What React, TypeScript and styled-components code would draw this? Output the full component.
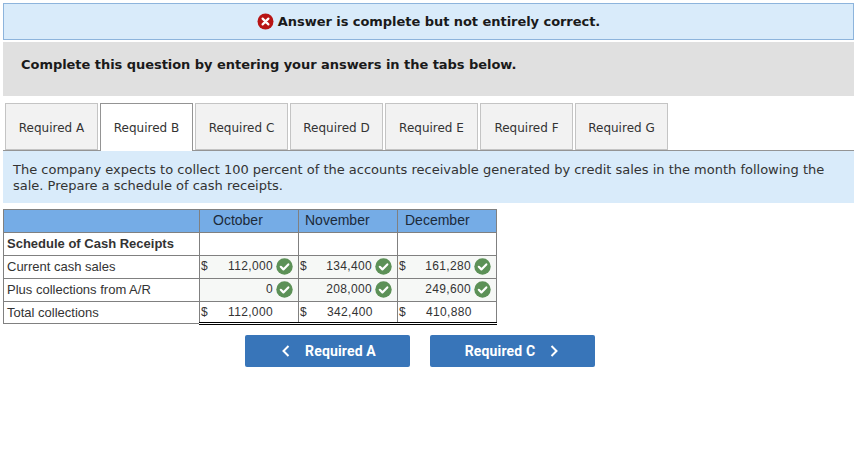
import * as React from 'react';
import styled, { createGlobalStyle } from 'styled-components';

const Global = createGlobalStyle`
  html, body {
    margin: 0;
    padding: 0;
    background: #fff;
  }
`;

const Page = styled.div`
  width: 851px;
  padding: 3px 0 0 3px;
  font-family: 'DejaVu Sans', Verdana, sans-serif;
`;

const Banner = styled.div`
  box-sizing: border-box;
  height: 37px;
  display: flex;
  align-items: center;
  justify-content: center;
  gap: 4px;
  background: #d9ebfa;
  border: 1px solid #8db4dc;
  font-size: 13px;
  font-weight: bold;
  letter-spacing: -0.05px;
  color: #1a1a1a;
`;

const Instruction = styled.div`
  box-sizing: border-box;
  height: 54px;
  margin-top: 2px;
  padding: 15px 18px 0;
  background: #e0e0e0;
  font-size: 13px;
  font-weight: bold;
  letter-spacing: -0.045px;
  line-height: 16px;
  color: #1a1a1a;
`;

const Tabs = styled.div`
  display: flex;
  gap: 2px;
  margin-top: 7px;
  padding-left: 2px;
  border-bottom: 1px solid #949494;
  height: 47px;
`;

const Tab = styled.div<{ $active?: boolean }>`
  box-sizing: border-box;
  width: 93px;
  height: ${p => (p.$active ? 48 : 47)}px;
  padding-top: ${p => (p.$active ? 0 : 2)}px;
  display: flex;
  align-items: center;
  justify-content: center;
  background: ${p => (p.$active ? '#fff' : '#f2f2f2')};
  border: 1px solid ${p => (p.$active ? '#949494' : '#c4c4c4')};
  border-bottom: ${p => (p.$active ? 'none' : undefined)};
  font-size: 12px;
  color: #333;
`;

const Prompt = styled.div`
  box-sizing: border-box;
  height: 52px;
  padding: 11px 10px 0;
  background: #d9ebfa;
  font-size: 13px;
  letter-spacing: -0.005px;
  line-height: 16px;
  color: #333;
`;

const Sheet = styled.table`
  margin-top: 6px;
  width: 493px;
  table-layout: fixed;
  border-collapse: collapse;
  font-family: 'Liberation Sans', Arial, sans-serif;
  font-size: 12px;
  color: #333;
`;

const Head = styled.th<{ $indent?: number }>`
  height: 23px;
  padding: 0 0 2px ${p => p.$indent ?? 0}px;
  box-sizing: border-box;
  background: #75ace6;
  border: 1px solid #808080;
  font-weight: normal;
  font-size: 14px;
  text-align: left;
  color: #1c2a3a;
`;

const Label = styled.td<{ $bold?: boolean; $total?: boolean }>`
  box-sizing: border-box;
  height: ${p => (p.$total ? 22 : 23)}px;
  padding: 0 0 ${p => (p.$total ? 0 : 2)}px 3px;
  border: 1px solid #808080;
  font-size: 13px;
  font-weight: ${p => (p.$bold ? 'bold' : 'normal')};
`;

const Cell = styled.td<{ $tint?: boolean; $total?: boolean }>`
  padding: 0;
  background: ${p => (p.$tint ? '#f6f8f6' : '#fff')};
  border: 1px solid #808080;
  ${p => p.$total && 'border-top: 1px solid #000; border-bottom: 3px double #000;'}
`;

const CellRow = styled.div<{ $total?: boolean }>`
  box-sizing: border-box;
  display: flex;
  align-items: center;
  height: ${p => (p.$total ? 20 : 22)}px;
  padding: 0 5px ${p => (p.$total ? 0 : 2)}px 1px;
`;

const Dollar = styled.span`
  width: 10px;
`;

const Amount = styled.span<{ $total?: boolean }>`
  flex: ${p => (p.$total ? '0 0 auto' : '1')};
  margin-left: ${p => (p.$total ? 17 : 0)}px;
  padding-right: 3px;
  text-align: right;
  letter-spacing: 0.35px;
`;

const Nav = styled.div`
  display: flex;
  gap: 20px;
  margin: 10px 0 0 242px;
`;

const NavButton = styled.div<{ $back?: boolean }>`
  box-sizing: border-box;
  width: 165px;
  height: 32px;
  padding: 0 ${p => (p.$back ? 0 : 2)}px 0 ${p => (p.$back ? 3 : 0)}px;
  display: flex;
  align-items: center;
  justify-content: center;
  gap: 15px;
  background: #3875b9;
  border-radius: 2px;
  font-family: Roboto, sans-serif;
  font-size: 14px;
  font-weight: bold;
  letter-spacing: 0.15px;
  color: #fff;
`;

const ErrorIcon = () => (
  <svg width="17" height="17" viewBox="0 0 17 17">
    <circle cx="8.5" cy="8.5" r="8" fill="#b81414" />
    <path d="M5.6 5.6l5.8 5.8M11.4 5.6l-5.8 5.8" stroke="#fff" strokeWidth="2.2" strokeLinecap="round" />
  </svg>
);

const CheckIcon = () => (
  <svg width="17" height="17" viewBox="0 0 17 17">
    <circle cx="8.5" cy="8.5" r="8.2" fill="#5c9157" />
    <path d="M4.8 8.8l2.6 2.6 4.9-5" fill="none" stroke="#fff" strokeWidth="2.2" strokeLinecap="round" strokeLinejoin="round" />
  </svg>
);

const Chevron = ({ left }: { left?: boolean }) => (
  <svg width="8" height="12" viewBox="0 0 8 12">
    <path d={left ? 'M6.5 1L1.5 6l5 5' : 'M1.5 1l5 5-5 5'} fill="none" stroke="#fff" strokeWidth="2" />
  </svg>
);

const tabs = ['A', 'B', 'C', 'D', 'E', 'F', 'G'];

const rows = [
  { label: 'Current cash sales', dollar: true, values: ['112,000', '134,400', '161,280'] },
  { label: 'Plus collections from A/R', dollar: false, values: ['0', '208,000', '249,600'] }
];

const totals = ['112,000', '342,400', '410,880'];

export default function App() {
  return (
    <Page>
      <Global />
      <Banner>
        <ErrorIcon />
        Answer is complete but not entirely correct.
      </Banner>
      <Instruction>Complete this question by entering your answers in the tabs below.</Instruction>
      <Tabs>
        {tabs.map(t => (
          <Tab key={t} $active={t === 'B'}>
            Required {t}
          </Tab>
        ))}
      </Tabs>
      <Prompt>
        The company expects to collect 100 percent of the accounts receivable generated by credit sales in the month
        following the sale. Prepare a schedule of cash receipts.
      </Prompt>
      <Sheet>
        <colgroup>
          <col width="196" />
          <col width="99" />
          <col width="99" />
          <col width="99" />
        </colgroup>
        <thead>
          <tr>
            <Head />
            <Head $indent={13}>October</Head>
            <Head $indent={6}>November</Head>
            <Head $indent={7}>December</Head>
          </tr>
        </thead>
        <tbody>
          <tr>
            <Label $bold>Schedule of Cash Receipts</Label>
            <Cell />
            <Cell />
            <Cell />
          </tr>
          {rows.map(r => (
            <tr key={r.label}>
              <Label>{r.label}</Label>
              {r.values.map(v => (
                <Cell key={v} $tint>
                  <CellRow>
                    {r.dollar && <Dollar>$</Dollar>}
                    <Amount>{v}</Amount>
                    <CheckIcon />
                  </CellRow>
                </Cell>
              ))}
            </tr>
          ))}
          <tr>
            <Label $total>Total collections</Label>
            {totals.map(v => (
              <Cell key={v} $total>
                <CellRow $total>
                  <Dollar>$</Dollar>
                  <Amount $total>{v}</Amount>
                </CellRow>
              </Cell>
            ))}
          </tr>
        </tbody>
      </Sheet>
      <Nav>
        <NavButton $back>
          <Chevron left />
          Required A
        </NavButton>
        <NavButton>
          Required C
          <Chevron />
        </NavButton>
      </Nav>
    </Page>
  );
}
